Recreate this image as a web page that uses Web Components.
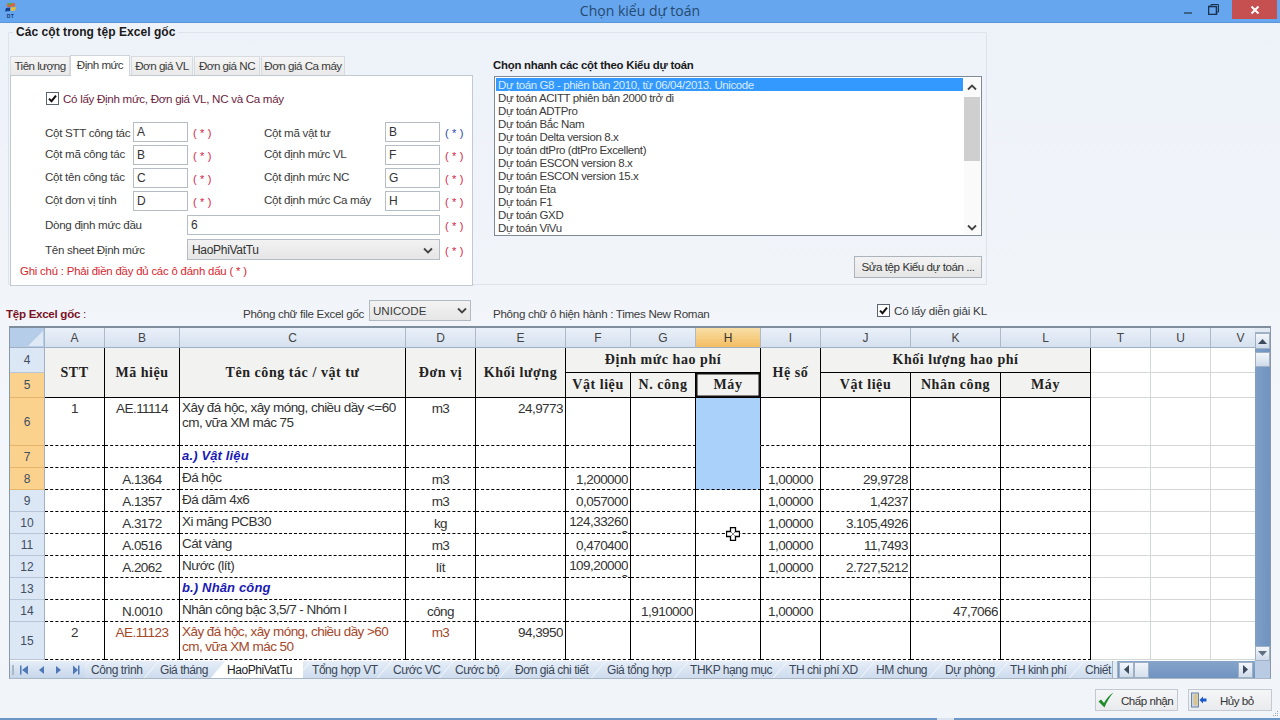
<!DOCTYPE html>
<html lang="vi"><head><meta charset="utf-8"><title>Chọn kiểu dự toán</title>
<style>
html,body{margin:0;padding:0;width:1280px;height:720px;overflow:hidden;background:#eff3f9}
body{font:11.6px "Liberation Sans",Arial,sans-serif;color:#333;letter-spacing:-.3px}
</style></head><body>
<app-window>
  <title-bar>Chọn kiểu dự toán</title-bar>
  <group-box legend="Các cột trong tệp Excel gốc">
    <column-tabs slot="left"></column-tabs>
    <type-picker slot="right"></type-picker>
  </group-box>
  <file-row></file-row>
  <sheet-view></sheet-view>
  <dialog-footer></dialog-footer>
</app-window>
<script>
const CHECK=`<svg width="13" height="13" viewBox="0 0 13 13" style="display:block;flex:none"><rect x=".5" y=".5" width="12" height="12" fill="#fff" stroke="#5a6470"/><path d="M3 6.600l2.500 2.600L10 3.600" fill="none" stroke="#111" stroke-width="2"/></svg>`;
const CHEV=d=>`<svg width="10" height="7" viewBox="0 0 10 7" style="display:block"><path d="${d?'M1 1.500l4 4 4-4':'M1 5.500l4-4 4 4'}" fill="none" stroke="#444" stroke-width="1.800"/></svg>`;
function def(name,css,html){
  customElements.define(name,class extends HTMLElement{
    constructor(){super();const s=this.attachShadow({mode:'open'});
      s.innerHTML=`<style>${css}</style>`+(typeof html==='function'?html(this):html);}
  });
}
def('app-window',`:host{display:flex;flex-direction:column;width:1280px;height:720px;background:linear-gradient(#edf2f9,#f3f6fa 60%,#f1f4f8);overflow:hidden;position:relative}`,`<slot></slot>`);

def('title-bar',`:host{display:grid;grid-template-columns:1fr auto 1fr;flex:none;height:23px;background:#65a6ee;border-bottom:1px solid #5b97d8;box-sizing:border-box;letter-spacing:0}
 .ic{width:13px;height:17px;margin:3px 0 0 4px;display:flex;flex-direction:column;align-items:center}
 .dt{font:bold 5px/6px "Liberation Sans",sans-serif;color:#123a7a;letter-spacing:.5px}
 .t{text-align:center;font:14px/22px "Open Sans","Liberation Sans",sans-serif;color:#27496f;padding-left:0}
 .c{display:flex;align-items:flex-start;justify-self:end}
 .b{width:25px;height:19px;display:flex;align-items:center;justify-content:center}
 .x{width:45px;background:#c64f4f;margin:0 3px 0 6px}`,
 `<div class="ic"><svg width="12" height="10" viewBox="0 0 12 10"><path d="M2 0.500l8-.5v3.500L2 4z" fill="#d9653a"/><path d="M3 0l4 0v1.500L3 2z" fill="#5aa84a"/><path d="M1 5l4-.5V8L0 8.500z" fill="#15409a"/><path d="M6 4.400l5-.5L10 7.500l-4 .4z" fill="#f0c020"/></svg><span class="dt">DT</span></div>
  <div class="t"><slot></slot></div>
  <div class="c"><div class="b"><svg width="10" height="10"><rect x="0" y="7" width="8" height="2" fill="#3d6288"/></svg></div>
  <div class="b"><svg width="11" height="11" viewBox="0 0 11 11"><path d="M3 2V.5h7.500V8H8.500" fill="none" stroke="#1c3350" stroke-width="1"/><rect x=".5" y="2.500" width="8" height="8" fill="none" stroke="#1c3350" stroke-width="1.600"/></svg></div>
  <div class="b x"><svg width="10" height="10" viewBox="0 0 10 10"><path d="M1.500 1.500l7 7M8.500 1.500l-7 7" stroke="#fff" stroke-width="2"/></svg></div></div>`);

def('group-box',`:host{display:block;flex:none;margin:2px 0 0 8px;width:979px}
 fieldset{margin:0;padding:0;border:1px solid #dde3ea;height:260px;box-sizing:border-box;min-width:0;border-radius:1px}
 legend{margin-left:4px;padding:0 3px;font:bold 12px/15px "Liberation Sans",sans-serif;color:#1a1a1a;letter-spacing:.05px}
 .in{display:flex;margin-top:14px}`,
 h=>`<fieldset><legend>${h.getAttribute('legend')}</legend><div class="in"><slot name="left"></slot><slot name="right"></slot></div></fieldset>`);

const star=(c)=>`<span class="s" style="color:${c||'#d2254a'}">( * )</span>`;
def('column-tabs',`:host{display:block;width:463px;flex:none;margin-left:1px}
 .tabs{display:flex;align-items:flex-end;height:21px;padding-left:0;letter-spacing:-.5px}
 .tb{height:19px;box-sizing:border-box;border:1px solid #d7dbe0;border-bottom:0;background:linear-gradient(#f5f5f5,#e9e9e9);padding:2px 0 0;text-align:center;margin-right:1px;color:#3a3a3a;white-space:nowrap}
 .on{height:21px;background:#fff;margin:0 1px 0 -1px;padding-top:2px;border-color:#cfd4da;position:relative;top:1px}
 .p{border:1px solid #c3c9d0;background:#fff;height:211px;box-sizing:border-box;padding:15px 0 0 34px}
 .chk{display:flex;gap:4px;align-items:center;margin-left:1px;color:#6b2440;height:14px}
 .g{display:grid;grid-template-columns:88px 55px 76px 121px 55px 32px;grid-template-rows:20px 20px 20px 20px 21px 22px;row-gap:3px;margin-top:17px;align-items:end}
 .g>span{white-space:nowrap;color:#3a3a3a;align-self:center}
 .g>span.u{padding-bottom:3px}
 .g>span.s{align-self:end;padding-bottom:3px}
 i{font-style:normal;box-sizing:border-box;display:block;height:20px;border:1px solid #b6bcc4;background:#fff;padding:2px 0 0 3px;font-size:12px;color:#333;letter-spacing:0}
 .s{padding-left:5px;font-size:11px;word-spacing:1px}
 .wide{grid-column:3/6;margin-left:-1px}
 .sel{grid-column:3/6;margin-left:-1px;height:21px;border:1px solid #b6bcc4;box-sizing:border-box;background:linear-gradient(#f2f2f2,#e6e6e6);display:flex;align-items:center;justify-content:space-between;padding:1px 6px 0 4px;color:#333;font-size:12px}
 .note{color:#d9262e;margin:5px 0 0 -25px;font-size:11.4px;letter-spacing:-.2px}`,
 `<div class="tabs"><div class="tb" style="width:60px">Tiên lượng</div><div class="tb on" style="width:60px">Định mức</div><div class="tb" style="width:62px">Đơn giá VL</div><div class="tb" style="width:66px">Đơn giá NC</div><div class="tb" style="width:84px">Đơn giá Ca máy</div></div>
 <div class="p"><div class="chk">${CHECK}<span>Có lấy Định mức, Đơn giá VL, NC và Ca máy</span></div>
 <div class="g">
 <span>Cột STT công tác</span><i>A</i>${star()}<span>Cột mã vật tư</span><i>B</i>${star('#2b44b0')}
 <span class="u">Cột mã công tác</span><i>B</i>${star()}<span class="u">Cột định mức VL</span><i>F</i>${star()}
 <span class="u">Cột tên công tác</span><i>C</i>${star()}<span class="u">Cột định mức NC</span><i>G</i>${star()}
 <span class="u">Cột đơn vị tính</span><i>D</i>${star()}<span class="u">Cột định mức Ca máy</span><i>H</i>${star()}
 <span style="grid-column:1/3">Dòng định mức đầu</span><i class="wide">6</i>${star()}
 <span style="grid-column:1/3">Tên sheet Định mức</span><div class="sel">HaoPhiVatTu${CHEV(1)}</div>${star()}
 </div><div class="note">Ghi chú : Phải điền đầy đủ các ô đánh dấu ( * )</div></div>`);

const items=['Dự toán G8 - phiên bản 2010, từ 06/04/2013. Unicode','Dự toán ACITT phiên bản 2000 trở đi','Dự toán ADTPro','Dự toán Bắc Nam','Dự toán Delta version 8.x','Dự toán dtPro (dtPro Excellent)','Dự toán ESCON version 8.x','Dự toán ESCON version 15.x','Dự toán Eta','Dự toán F1','Dự toán GXD','Dự toán ViVu'];
def('type-picker',`:host{display:block;margin-left:20px;width:489px;flex:none}
 .h{font:bold 11.4px/15px "Liberation Sans",sans-serif;color:#1a1a1a;margin-top:4px;letter-spacing:-.25px}
 .lb{margin:3px 0 0 1px;height:160px;box-sizing:border-box;border:1px solid #7f8a96;background:#fff;display:flex;padding:1px}
 .l{flex:1;overflow:hidden}
 .it{height:13px;line-height:14px;padding-left:2px;color:#3a3a3a;white-space:nowrap;font-size:11.5px;letter-spacing:-.4px}
 .it.on{background:#3399ff;color:#d8ebff;margin-right:1px}
 .sb{width:16px;background:#fafafa;display:flex;flex-direction:column;align-items:center}
 .th{width:16px;height:64px;background:#cfcfcf;margin-top:3px}
 .u{height:13px;display:flex;align-items:center;padding-top:1px}
 .sp{flex:1}
 .btn{display:block;margin:20px 0 0 auto;width:128px;height:22px;box-sizing:border-box;border:1px solid #adb3ba;background:linear-gradient(#f3f3f3,#e6e6e6);text-align:center;line-height:20px;color:#333;white-space:nowrap;letter-spacing:-.45px}`,
 `<div class="h">Chọn nhanh các cột theo Kiểu dự toán</div>
 <div class="lb"><div class="l">${items.map((t,i)=>`<div class="it${i?'':' on'}">${t}</div>`).join('')}</div>
 <div class="sb"><div class="u" style="margin-top:2px">${CHEV(0)}</div><div class="th"></div><div class="sp"></div><div class="u">${CHEV(1)}</div></div></div>
 <div class="btn">Sửa tệp Kiểu dự toán ...</div>`);

def('file-row',`:host{display:flex;align-items:center;flex:none;height:21px;margin-top:16px;white-space:nowrap;color:#3a3a3a}
 .a{width:243px;padding-left:6px;box-sizing:border-box;font-weight:bold;color:#7b1325}
 .a em{font-style:normal;font-weight:normal}
 .b{width:126px}
 .sel{width:102px;height:21px;box-sizing:border-box;border:1px solid #b3b9c0;background:linear-gradient(#f3f3f3,#e6e6e6);display:flex;align-items:center;justify-content:space-between;padding:0 3px 0 3px;margin-top:-3px;letter-spacing:0}
 .c{margin-left:22px;width:384px}
 .d{display:flex;gap:4px;align-items:center;margin-top:-3px;letter-spacing:-.2px}
 .a,.b,.c{padding-top:4px}`,
 `<div class="a">Tệp Excel gốc <em>:</em></div><div class="b">Phông chữ file Excel gốc</div><div class="sel">UNICODE${CHEV(1)}</div><div class="c">Phông chữ ô hiện hành : Times New Roman</div><div class="d">${CHECK}<span>Có lấy diễn giải KL</span></div>`);

const colW={A:60,B:75,C:226,D:70,E:90,F:65,G:65,H:65,I:60,J:90,K:90,L:90,T:60,U:60,V:60};
const letters=Object.keys(colW);
const R=(n,h,c)=>({n,h,c});
const rows=[
 R(6,48,{A:'1',B:'AE.11114',C:'Xây đá hộc, xây móng, chiều dầy &lt;=60 cm, vữa XM mác 75',D:'m3',E:'24,9773',top:1}),
 R(7,22,{C:'<b class="sec">a.) Vật liệu</b>'}),
 R(8,22,{B:'A.1364',C:'Đá hộc',D:'m3',F:'1,200000',I:'1,00000',J:'29,9728'}),
 R(9,22,{B:'A.1357',C:'Đá dăm 4x6',D:'m3',F:'0,057000',I:'1,00000',J:'1,4237'}),
 R(10,22,{B:'A.3172',C:'Xi măng PCB30',D:'kg',F:'124,33260<br>0',I:'1,00000',J:'3.105,4926',wrap:1}),
 R(11,22,{B:'A.0516',C:'Cát vàng',D:'m3',F:'0,470400',I:'1,00000',J:'11,7493'}),
 R(12,22,{B:'A.2062',C:'Nước (lít)',D:'lít',F:'109,20000<br>0',I:'1,00000',J:'2.727,5212',wrap:1}),
 R(13,22,{C:'<b class="sec">b.) Nhân công</b>'}),
 R(14,22,{B:'N.0010',C:'Nhân công bậc 3,5/7 - Nhóm I',D:'công',G:'1,910000',I:'1,00000',K:'47,7066'}),
 R(15,38,{A:'2',B:'AE.11123',C:'Xây đá hộc, xây móng, chiều dầy &gt;60 cm, vữa XM mác 50',D:'m3',E:'94,3950',top:1,red:1}),
];
const al={A:'c',B:'c',C:'l',D:'c',E:'r',F:'r',G:'r',H:'c',I:'c',J:'r',K:'r',L:'r'};
function tableHtml(){
 let s='<table><colgroup><col style="width:35px">'+letters.map(l=>`<col style="width:${colW[l]}px">`).join('')+'</colgroup>';
 s+='<tr style="height:20px"><th class="corner"><svg width="34" height="19" style="display:block"><path d="M33 3v15H18z" fill="#dfe9f5"/></svg></th>'+letters.map(l=>`<th class="ch${l==='H'?' act':''}">${l}</th>`).join('')+'</tr>';
 const H=(t,x='')=>`<td class="hd ${x}">${t}</td>`, H2=(t)=>`<td class="hd" rowspan="2">${t}</td>`;
 const E='<td class="g"></td><td class="g"></td><td class="g"></td>';
 s+=`<tr style="height:25px"><th class="rh">4</th>${H2('STT')}${H2('Mã hiệu')}${H2('Tên công tác / vật tư')}${H2('Đơn vị')}${H2('Khối lượng')}<td class="hd" colspan="3">Định mức hao phí</td>${H2('Hệ số')}<td class="hd" colspan="3">Khối lượng hao phí</td>${E}</tr>`;
 s+=`<tr style="height:25px"><th class="rh sel">5</th>${H('Vật liệu')}${H('N. công')}${H('Máy','cur')}${H('Vật liệu')}${H('Nhân công')}${H('Máy')}${E}</tr>`;
 for(const r of rows){
  const sel=[6,7,8].includes(r.n);
  s+=`<tr style="height:${r.h}px"><th class="rh${sel?' sel':''}">${r.n}</th>`;
  for(const l of letters.slice(0,12)){
    let v=r.c[l]||'',cls='d '+al[l],mh=r.h-3;
    if(r.c.top)cls+=' top';
    if(r.c.red&&'BCD'.includes(l))cls+=' red';
    if(l==='H'&&sel)cls+=' fill';
    if(r.n===8&&l==='H')cls+=' last';
    if(r.c.wrap&&l==='F'){cls+=' wrap';mh=r.h-4}
    s+=`<td class="${cls}"><div style="max-height:${mh}px">${v}</div></td>`;
  }
  s+=E+'</tr>';
 }
 return s+'</table>';
}
def('sheet-view',`:host{display:grid;grid-template-columns:1245px 15px;grid-template-rows:333px 17px;flex:none;width:1260px;margin:4px 0 0 9px;border:1px solid #8a99a8;border-top:2px solid #7f8e9d;position:relative;border-bottom-color:#a9b6c4;letter-spacing:0}
 .cells{overflow:hidden;background:#fff}
 table{border-collapse:separate;border-spacing:0;table-layout:fixed;width:1250px;font:13.5px/15px "Liberation Sans",sans-serif;color:#333}
 th,td{padding:0;box-sizing:border-box;overflow:hidden}
 .corner{background:#b5cde8;border-right:1px solid #a3b5c9;border-bottom:1px solid #9fb0c2}
 .ch{font:12px "Liberation Sans",sans-serif;color:#444;background:linear-gradient(#e9f0f9,#d6e1ef);border-right:1px solid #aeb9c7;border-bottom:1px solid #9fb0c2}
 .act{background:linear-gradient(#f8dfa6,#f4bd62);color:#333}
 .rh{font:12px "Liberation Sans",sans-serif;color:#3f4d5f;background:#dce7f5;border-right:1px solid #9fb0c2;border-bottom:1px solid #b6c5d8}
 .rh.sel{background:#fbd18e;border-bottom-color:#e6b56c}
 .hd{background:#f2f2f0;font:bold 14px "Liberation Serif",serif;color:#222;text-align:center;border-right:1px solid #000;border-bottom:1px solid #000;letter-spacing:.55px}
 .cur{box-shadow:inset 0 0 0 1.500px #111}
 .g{border-right:1px solid #d4d8d4;border-bottom:1px solid #d4d8d4}
 .d{border-right:1px solid #000;border-bottom:1px dashed #000;vertical-align:bottom;padding:0 2px 2px;letter-spacing:-.55px}
 .d.l{padding-bottom:4px}
 .d>div{overflow:hidden}
 .c{text-align:center}.r{text-align:right}.l{text-align:left}
 .d.top{vertical-align:top;padding-top:3px;padding-bottom:0}
 .d.top.l{padding-top:2px}
 .d.wrap{vertical-align:top;padding-top:3px;padding-bottom:0;line-height:14px}
 .red{color:#a5482a}
 .sec{font-style:italic;color:#1a1ab4;font-weight:bold;font-size:13px;letter-spacing:.15px}
 .fill{background:#aad1fa;border-bottom:1px solid #aad1fa}
 .last{border-bottom:1px dashed #000}
 .cross{position:absolute;left:716px;top:199px}`,
 `<div class="cells">${tableHtml()}</div><scroll-v></scroll-v><sheet-tabs></sheet-tabs><scroll-corner></scroll-corner>
 <svg class="cross" width="14" height="14" viewBox="0 0 14 14"><path d="M4.500.5h5v4h4v5h-4v4h-5v-4h-4v-5h4z" fill="#fff" stroke="#000" stroke-width="1.300"/><path d="M5 5l4 4M9 5L5 9" stroke="#888"/></svg>`);

const BTN=`width:15px;height:15px;box-sizing:border-box;border:1px solid #9fb0c4;background:linear-gradient(#f4f7fb,#cfdbea);display:flex;align-items:center;justify-content:center`;
def('scroll-v',`:host{display:flex;flex-direction:column;background:linear-gradient(90deg,#7f9fc8,#7093c0)}
 .grip{height:5px;background:#e2eaf4;border-bottom:1px solid #9fb0c4;box-sizing:border-box}
 .b{${BTN}}
 .th{${BTN};margin-top:3px}
 .sp{flex:1}`,
 `<div class="grip"></div><div class="b" style="height:16px"><svg width="9" height="5"><path d="M0 5h9L4.500 0z" fill="#3c4a5c"/></svg></div><div class="th"></div><div class="sp"></div><div class="b"><svg width="9" height="5"><path d="M0 0h9L4.500 5z" fill="#5f6d80"/></svg></div>`);
def('scroll-corner',`:host{display:block;background:#b9cbe2}`,``);

const tabs=[['Công trình',51],['Giá tháng',49],['HaoPhiVatTu',67],['Tổng hợp VT',63],['Cước VC',44],['Cước bộ',42],['Đơn giá chi tiết',74],['Giá tổng hợp',65],['THKP hạng mục',81],['TH chi phí XD',69],['HM chung',51],['Dự phòng',47],['TH kinh phí',57],['Chiết',40]];
def('sheet-tabs',`:host{display:flex;align-items:stretch;overflow:hidden;background:linear-gradient(#e6eef8,#c6d6ea);font:12px/18px "Liberation Sans",sans-serif;color:#3a4656;min-width:0;letter-spacing:-.45px}
 .nav{flex:none;width:75px;display:flex;align-items:center;padding-left:1px;box-sizing:border-box}
 .nav svg{display:block}
 .tl{display:flex;overflow:hidden;min-width:0;position:relative;z-index:0;width:1027px;flex:none}
 .t{flex:none;box-sizing:border-box;position:relative;white-space:nowrap;margin-left:18px;background:linear-gradient(#e6eef8,#cedcee)}
 .t:first-child{margin-left:6px}
 .t.on{background:#fff;color:#222;z-index:1}
 .t::before{content:"";position:absolute;left:-9px;top:0;bottom:0;width:18px;background:inherit;border-left:1px solid #f5f8fc;transform:skewX(-40deg);z-index:-1}
 .t::after{content:"";position:absolute;right:-9px;top:0;bottom:0;width:9px;background:inherit;z-index:-1}
 .h{flex:none;width:143px;display:flex;align-items:center;background:linear-gradient(#85a4cb,#7093c0);height:17px;border-left:1px solid #9fb0c4;box-sizing:border-box;padding-right:2px}
 .grip{width:5px;height:17px;background:#e2eaf4;border-right:1px solid #9fb0c4;box-sizing:border-box;flex:none}
 .b{${BTN};height:16px;flex:none}
 .sp{flex:1}`,
 `<div class="nav"><svg width="74" height="12" viewBox="0 0 74 12"><rect x="1" y="1" width="2" height="10" fill="#aab7c6"/><rect x="9" y="1.500" width="1.500" height="9" fill="#4f78b8"/><path d="M17 1.500v9l-6-4.500zM33 2v8l-5-4z" fill="#4f78b8"/><path d="M45 2v8l5-4zM62 1.500v9l5-4.500z" fill="#4f78b8"/><rect x="67" y="1.500" width="1.500" height="9" fill="#4f78b8"/></svg></div>
 <div class="tl">${tabs.map(([t,w],i)=>`<div class="t${i===2?' on':''}" style="width:${w}px">${t}</div>`).join('')}</div>
 <div class="h"><div class="grip"></div><div class="b" style="margin-left:1px"><svg width="5" height="9"><path d="M5 0v9L0 4.500z" fill="#3c4a5c"/></svg></div><div class="b" style="background:linear-gradient(#f0f4f9,#d5e0ee)"></div><div class="sp"></div><div class="b"><svg width="5" height="9"><path d="M0 0v9l5-4.500z" fill="#3c4a5c"/></svg></div></div>`);

def('dialog-footer',`:host{display:flex;flex:1;flex-direction:column;min-height:0}
 .r{display:flex;justify-content:flex-end;gap:10px;padding:10px 8px 0 0}
 .b{height:22px;width:84px;box-sizing:border-box;border:1px solid #c3c9d0;background:linear-gradient(#f5f6f8,#e9ebee);display:flex;align-items:center;color:#333;white-space:nowrap;letter-spacing:-.5px}
 .sp{flex:1}
 .bar{height:2px;background:#6b97c6;display:flex}
 .n{width:17px;height:2px;background:#dbe4ee;margin-left:937px}
 .dots{position:absolute;right:1px;bottom:3px}`,
 `<div class="r"><div class="b" style="width:83px"><svg width="16" height="16" viewBox="0 0 16 16" style="margin:0 7px 0 2px;flex:none"><path d="M.5 9.500L3 7.500 6 11C8.500 6.500 11.500 3 15.500 .5 11.500 5 8.500 10 6.500 15.500z" fill="#1f8a2c"/></svg>Chấp nhận</div>
 <div class="b"><svg width="17" height="16" viewBox="0 0 17 16" style="margin:0 13px 0 1px;flex:none"><rect x="1.500" y="1" width="7" height="14" fill="#c7d6ec" stroke="#6f83a6"/><path d="M3.500 3l4-1.500V14l-4-1.500z" fill="#dcc58a"/><path d="M9.500 8L13 4.500V6.500h3.500v3H13v2z" fill="#1b58c8"/></svg>Hủy bỏ</div></div>
 <div class="sp"></div><div class="bar"><div class="n"></div></div>
 <svg class="dots" width="6" height="6" viewBox="0 0 6 6"><path d="M4 0h1v1H4zM2 2h1v1H2zM4 2h1v1H4zM0 4h1v1H0zM2 4h1v1H2zM4 4h1v1H4z" fill="#9aa7b5"/></svg>`);
</script>
</body></html>
